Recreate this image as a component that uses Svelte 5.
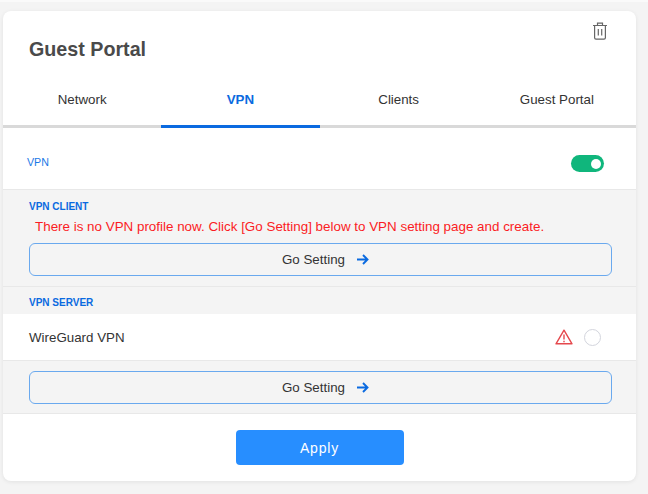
<script>
  const tabs = ['Network', 'VPN', 'Clients', 'Guest Portal'];
  const active = 'VPN';
</script>

{#snippet goSetting()}
  <button class="go">
    Go Setting
    <svg width="12" height="11" viewBox="0 0 12 11" fill="none" stroke="#0a6ae0" stroke-width="1.9">
      <path d="M0 5.5h10.5M6 1l4.5 4.5L6 10" />
    </svg>
  </button>
{/snippet}

<div class="page">
  <div class="card">
    <header class="head">
      <h1>Guest Portal</h1>
      <svg class="trash" width="16" height="18" viewBox="0 0 16 18" fill="none" stroke="#666" stroke-width="1.2">
        <path d="M1 3.5h14M5.5 3.5V1.2h5v2.3M2.6 3.5v12.2c0 .8.6 1.4 1.4 1.4h8c.8 0 1.4-.6 1.4-1.4V3.5M6.3 7v6.5M9.7 7v6.5" />
      </svg>
    </header>

    <nav class="tabs">
      {#each tabs as tab}
        <div class="tab" class:active={tab === active}>{tab}</div>
      {/each}
    </nav>

    <div class="toggle-row">
      <span class="toggle-label">VPN</span>
      <span class="switch"><span class="knob"></span></span>
    </div>

    <section class="client">
      <h2>VPN CLIENT</h2>
      <p class="warn">There is no VPN profile now. Click [Go Setting] below to VPN setting page and create.</p>
      {@render goSetting()}
    </section>

    <section class="server">
      <h2>VPN SERVER</h2>
    </section>

    <div class="server-row">
      <span>WireGuard VPN</span>
      <div class="status">
        <svg width="18" height="16" viewBox="0 0 18 16" fill="none" stroke="#e5484d" stroke-width="1.4">
          <path d="M9 1.2 1 14.8h16z" stroke-linejoin="round" />
          <path d="M9 5.6v5M9 11.8v1.5" />
        </svg>
        <span class="radio"></span>
      </div>
    </div>

    <section class="server-go">
      {@render goSetting()}
    </section>

    <footer class="foot">
      <button class="apply">Apply</button>
    </footer>
  </div>
</div>

<style>
  :global(body) {
    margin: 0;
    background: #f4f4f4;
  }

  .page {
    height: 494px;
    box-sizing: border-box;
    padding: 9px 12px 0 3px;
    border-top: 2px solid #fafafa;
    font-family: "Liberation Sans", Arial, sans-serif;
    color: #333;
  }

  .card {
    height: 470px;
    background: #fff;
    border-radius: 8px;
    box-shadow: 0 1px 4px rgba(0, 0, 0, 0.08);
    overflow: hidden;
  }

  .head {
    position: relative;
    height: 59px;
    padding: 26px 0 0 26px;
    box-sizing: border-box;
  }

  h1 {
    margin: 0;
    font-size: 19.7px;
    line-height: 24px;
    font-weight: 700;
    color: #4a4a4a;
  }

  .trash {
    position: absolute;
    top: 11px;
    right: 28px;
  }

  .tabs {
    display: grid;
    grid-template-columns: repeat(4, 1fr);
    height: 55px;
    border-bottom: 3px solid #d9d9d9;
    box-sizing: content-box;
  }

  .tab {
    display: flex;
    align-items: center;
    justify-content: center;
    padding-top: 4px;
    font-size: 13.33px;
    color: #333;
    margin-bottom: -3px;
    border-bottom: 3px solid transparent;
  }

  .tab.active {
    color: #0a6ae0;
    font-weight: 700;
    border-bottom-color: #0a6ae0;
  }

  .toggle-row {
    display: flex;
    align-items: center;
    justify-content: space-between;
    height: 61px;
    padding: 6px 32px 0 24px;
    box-sizing: border-box;
  }

  .toggle-label {
    font-size: 10.67px;
    color: #1a78e6;
  }

  .switch {
    display: flex;
    justify-content: flex-end;
    align-items: center;
    width: 33px;
    height: 17px;
    margin-top: 4px;
    padding: 0 3px;
    box-sizing: border-box;
    border-radius: 9px;
    background: #10b67c;
  }

  .knob {
    width: 10px;
    height: 10px;
    border-radius: 50%;
    background: #fff;
  }

  section {
    background: #f4f4f4;
    box-sizing: border-box;
    padding: 0 24px 0 26px;
  }

  h2 {
    margin: 0;
    font-size: 10px;
    line-height: 12px;
    font-weight: 700;
    color: #0a6ae0;
  }

  .client {
    height: 98px;
    padding-top: 11px;
    border-top: 1px solid #e8e8e8;
    border-bottom: 1px solid #e8e8e8;
  }

  .warn {
    margin: 5px 0 8px 6px;
    font-size: 13.4px;
    line-height: 17px;
    color: #fb1c24;
    white-space: nowrap;
  }

  .go {
    display: flex;
    align-items: center;
    justify-content: center;
    gap: 12px;
    width: 100%;
    height: 33px;
    padding: 0 0 0 10px;
    border: 1px solid #6aa9ee;
    border-radius: 6px;
    background: #f4f4f4;
    font: inherit;
    font-size: 13.33px;
    color: #333;
  }

  .server {
    height: 27px;
    padding-top: 10px;
  }

  .server-row {
    display: flex;
    align-items: center;
    justify-content: space-between;
    height: 46px;
    padding: 0 35px 0 26px;
    font-size: 13.33px;
    box-sizing: border-box;
  }

  .status {
    display: flex;
    align-items: center;
    gap: 11px;
  }

  .radio {
    width: 17px;
    height: 17px;
    box-sizing: border-box;
    border: 1px solid #d3d5dd;
    border-radius: 50%;
  }

  .server-go {
    height: 54px;
    padding-top: 10px;
    border-top: 1px solid #e8e8e8;
    border-bottom: 1px solid #e8e8e8;
  }

  .foot {
    display: flex;
    justify-content: center;
    padding-top: 16px;
  }

  .apply {
    width: 168px;
    height: 35px;
    border: 0;
    border-radius: 4px;
    background: #278eff;
    color: #fff;
    font: inherit;
    font-size: 14px;
    letter-spacing: 0.8px;
  }
</style>
